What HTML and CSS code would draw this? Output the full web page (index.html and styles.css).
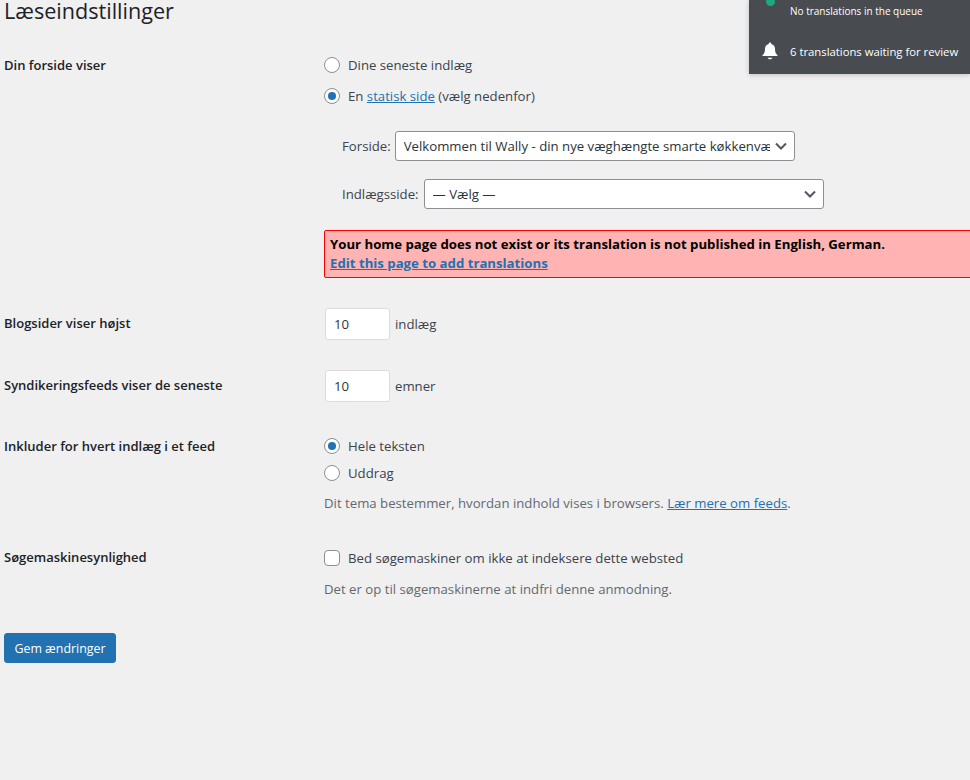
FILE: index.html
```html
<!DOCTYPE html>
<html lang="da">
<head>
<meta charset="utf-8">
<title>Læseindstillinger</title>
<link rel="stylesheet" href="styles.css">
</head>
<body>
<main class="wrap">
  <h1 class="title">Læseindstillinger</h1>

  <section class="row row-front">
    <div class="th">Din forside viser</div>
    <div class="td">
      <label class="choice"><span class="radio"></span>Dine seneste indlæg</label>
      <label class="choice choice-next"><span class="radio on"></span><span>En <a href="#">statisk side</a> (vælg nedenfor)</span></label>
      <div class="pick pick-first">
        <span>Forside:</span>
        <span class="select"><span class="select-text">Velkommen til Wally - din nye væghængte smarte køkkenvæg</span><svg class="chev" viewBox="0 0 12 8" width="12" height="8"><path d="M1 1.5l5 5 5-5" fill="none" stroke="#50575e" stroke-width="2"/></svg></span>
      </div>
      <div class="pick pick-second">
        <span>Indlægsside:</span>
        <span class="select"><span class="select-text">— Vælg —</span><svg class="chev" viewBox="0 0 12 8" width="12" height="8"><path d="M1 1.5l5 5 5-5" fill="none" stroke="#50575e" stroke-width="2"/></svg></span>
      </div>
      <div class="notice">
        <div>Your home page does not exist or its translation is not published in English, German.</div>
        <a href="#">Edit this page to add translations</a>
      </div>
    </div>
  </section>

  <section class="row row-posts">
    <div class="th">Blogsider viser højst</div>
    <div class="td inline"><input class="num" type="text" value="10"><span>indlæg</span></div>
  </section>

  <section class="row row-feeds">
    <div class="th">Syndikeringsfeeds viser de seneste</div>
    <div class="td inline"><input class="num" type="text" value="10"><span>emner</span></div>
  </section>

  <section class="row row-include">
    <div class="th">Inkluder for hvert indlæg i et feed</div>
    <div class="td">
      <label class="choice"><span class="radio on"></span>Hele teksten</label>
      <label class="choice choice-tight"><span class="radio"></span>Uddrag</label>
      <p class="desc desc-first">Dit tema bestemmer, hvordan indhold vises i browsers. <a href="#">Lær mere om feeds</a>.</p>
    </div>
  </section>

  <section class="row row-seo">
    <div class="th th-seo">Søgemaskinesynlighed</div>
    <div class="td">
      <label class="choice"><span class="check"></span>Bed søgemaskiner om ikke at indeksere dette websted</label>
      <p class="desc desc-second">Det er op til søgemaskinerne at indfri denne anmodning.</p>
    </div>
  </section>

  <button class="save" type="button">Gem ændringer</button>
</main>

<aside class="panel">
  <div class="panel-row panel-queue"><span class="dot"></span><span class="panel-small">No translations in the queue</span></div>
  <div class="panel-row panel-review">
    <svg class="bell" viewBox="0 0 16 18" width="16" height="18"><path d="M8 0.5c.8 0 1.300.6 1.300 1.400 2.400.6 3.700 2.500 3.700 5.100 0 3.200.8 4.700 2.500 6.200v.8H.5v-.8C2.200 11.700 3 10.200 3 7c0-2.600 1.300-4.500 3.700-5.100C6.700 1.100 7.200.5 8 .5z" fill="#fff"/><path d="M5.500 15.800h5c-.3.9-1.300 1.500-2.500 1.500s-2.200-.6-2.500-1.500z" fill="#fff"/></svg>
    <span>6 translations waiting for review</span>
  </div>
</aside>
</body>
</html>
```
FILE: styles.css
```css
* { box-sizing: border-box; }
html, body { margin: 0; height: 100%; }
body {
  background: #f0f0f1;
  color: #3c434a;
  font: 13.2px/20px "Open Sans", "Noto Sans", sans-serif;
  overflow: hidden;
  position: relative;
}
.wrap { padding-left: 4px; }
.title {
  margin: 0;
  font-size: 21.6px;
  line-height: 22px;
  font-weight: 400;
  color: #1d2327;
}
a { color: #2271b1; }
.row { display: flex; }
.th { width: 320px; flex: none; font-size: 13px; font-weight: 600; color: #1d2327; }
.th-seo { margin-top: -1px; }
.td { flex: none; width: 700px; }
.row-front { margin-top: 33px; }
.row-posts { margin-top: 30px; }
.row-feeds { margin-top: 30px; }
.row-include { margin-top: 34px; }
.row-seo { margin-top: 35px; }
.row-posts .th { margin-top: 5px; }
.row-feeds .th { margin-top: 5px; }
.choice { display: flex; align-items: center; gap: 8px; height: 20px; }
.choice-next { margin-top: 11px; }
.choice-tight { margin-top: 7px; }
.radio, .check {
  width: 16px; height: 16px; flex: none;
  background: #fff;
  border: 1px solid #8c8f94;
  border-radius: 50%;
  display: inline-flex; align-items: center; justify-content: center;
}
.radio.on::before { content: ""; width: 8px; height: 8px; border-radius: 50%; background: #2271b1; }
.check { border-radius: 4px; }
.pick { display: flex; align-items: center; gap: 4px; padding-left: 18px; height: 30px; margin-top: 18px; }
.pick-first { margin-top: 25px; }
.pick-second { gap: 5px; }
.select {
  width: 400px; height: 30px;
  background: #fff;
  border: 1px solid #8c8f94;
  border-radius: 3px;
  display: flex; align-items: center;
  padding: 0 8px;
  color: #2c3338;
  gap: 5px;
}
.select-text { flex: 1; min-width: 0; white-space: nowrap; overflow: hidden; }
.chev { flex: none; margin-right: -1px; }
.notice {
  margin-top: 21px;
  width: 700px; height: 48px;
  background: #ffb3b3;
  border: 1px solid #f00;
  border-radius: 2px 0 0 2px;
  padding: 4px 5px;
  font-weight: 700;
  color: #000;
  line-height: 19px;
}
.notice a { display: block; }
.inline { display: flex; align-items: center; gap: 5px; padding-left: 1px; }
.num {
  width: 65px; height: 32px;
  background: #fff;
  border: 1px solid #dcdcde;
  border-radius: 3px;
  padding: 0 8px;
  font: inherit;
  color: #2c3338;
  margin: 0;
}
.desc { margin: 0; color: #646970; }
.desc-first { margin-top: 10px; }
.desc-second { margin-top: 11px; }
.save {
  display: block;
  margin: 34px 0 0;
  width: 112px; height: 30px;
  background: #2271b1;
  border: 1px solid #2271b1;
  border-radius: 3px;
  color: #fff;
  font-family: inherit;
  font-size: 12.4px;
  padding: 0;
}
.panel {
  position: absolute; top: 0; right: 0;
  width: 221px; height: 74px;
  background: #484c50;
  color: #fff;
  box-shadow: 0 1px 5px rgba(0,0,0,.2);
  font-size: 11.3px;
}
.panel-row { position: relative; padding-left: 41px; white-space: nowrap; }
.panel-queue { height: 42px; padding-top: 1px; }
.panel-small { font-size: 10px; }
.panel-review { height: 20px; line-height: 20px; }
.dot { position: absolute; left: 17px; top: -3px; width: 9px; height: 9px; border-radius: 50%; background: #1fa784; }
.bell { position: absolute; left: 13px; top: 0; }
```
